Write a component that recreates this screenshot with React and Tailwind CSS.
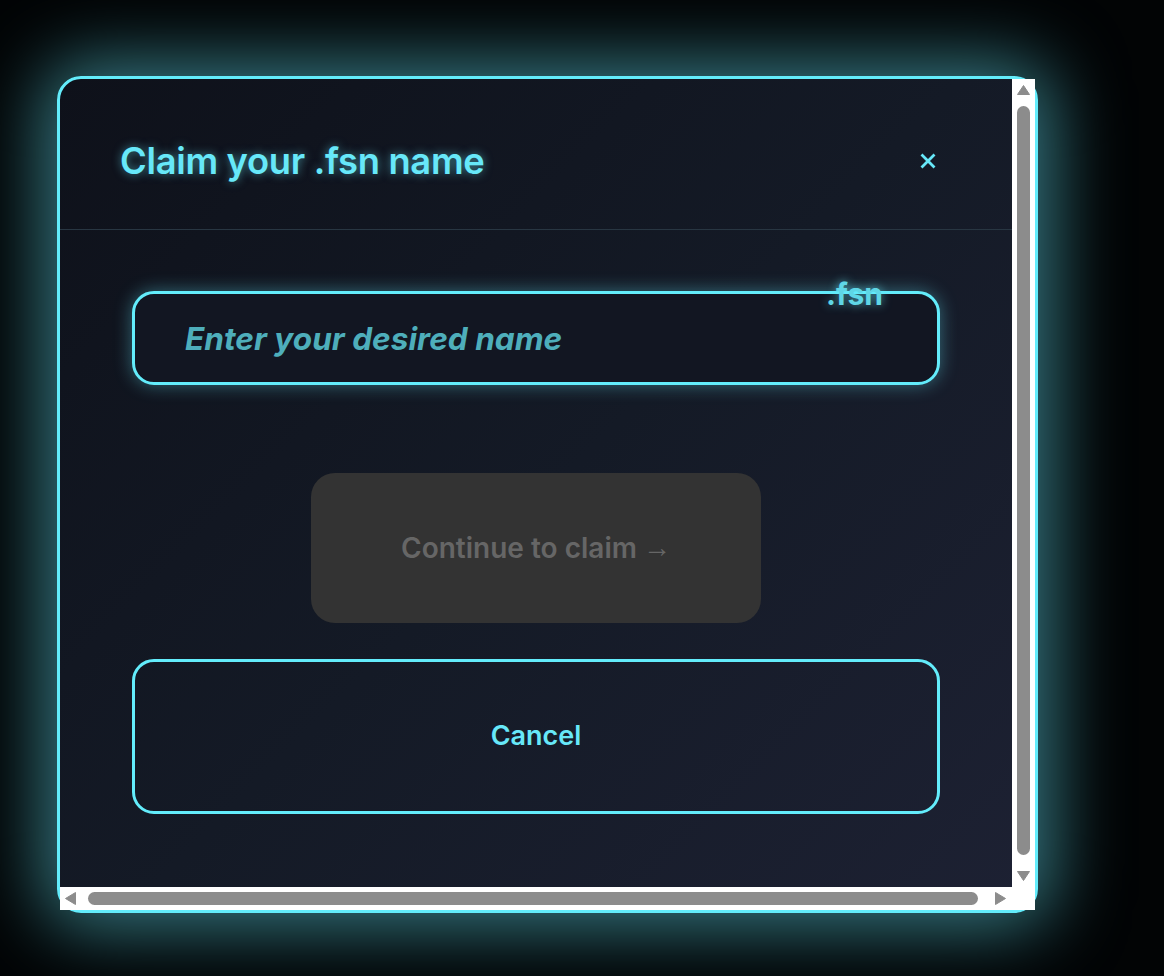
function ScrollArrow({ dir }) {
  const paths = {
    up: 'M6.5 0.5 12.5 9.5 0.5 9.5Z',
    down: 'M0.5 0.5 12.5 0.5 6.5 9.5Z',
    left: 'M10.5 0.5 10.5 12.5 0.5 6.5Z',
    right: 'M0.5 0.5 10.5 6.5 0.5 12.5Z',
  };
  const vertical = dir === 'up' || dir === 'down';
  return (
    <svg
      width={vertical ? 13 : 11}
      height={vertical ? 10 : 13}
      viewBox={vertical ? '0 0 13 10' : '0 0 11 13'}
      className="shrink-0"
    >
      <path d={paths[dir]} fill="#8c8c8c" stroke="#8c8c8c" strokeLinejoin="round" />
    </svg>
  );
}

export default function App() {
  return (
    <div className="min-h-[976px] w-full bg-[#020405] pl-[57px] pt-[76px] font-['Inter',sans-serif]">
      <div className="flex h-[837px] w-[981px] flex-col rounded-[24px] border-[3px] border-[#63ecfb] bg-[linear-gradient(135deg,#0e111a_0%,#141a26_50%,#1d2133_100%)] shadow-[0_0_75px_12px_rgba(103,232,249,0.55)]">
        <div className="flex min-h-0 flex-1">
          <div className="min-w-0 flex-1 overflow-hidden">
            {/* Header */}
            <div className="flex h-[151px] items-center justify-between border-b border-[#283642] pl-[60px] pr-[76px] pt-[14px]">
              <h2 className="text-[36.3px] font-semibold tracking-[-0.3px] text-[#67e8f9] [text-shadow:0_0_10px_rgba(103,232,249,0.55)]">
                Claim your .fsn name
              </h2>
              <svg width="16" height="16" viewBox="0 0 16 16" className="text-[#67e8f9]">
                <path d="M1.5 1.5 14.5 14.5M14.5 1.5 1.5 14.5" stroke="currentColor" strokeWidth="2.8" />
              </svg>
            </div>

            {/* Body */}
            <div className="flex flex-col items-center px-[72px] pt-[61px]">
              <div className="relative w-full">
                <input
                  placeholder="Enter your desired name"
                  className="h-[94px] w-full rounded-[22px] border-[3px] border-[#63ecfb] bg-[#121622] pl-[50px] pr-6 text-[31.6px] font-bold italic text-[#67e8f9] outline-none shadow-[0_0_18px_rgba(103,232,249,0.4)] placeholder:text-[#4eaebb]"
                />
                <span className="absolute right-[57px] top-[-19px] text-[30px] font-bold text-[#5fd6e6] [text-shadow:0_0_10px_rgba(103,232,249,0.7)]">
                  .fsn
                </span>
              </div>

              <button
                disabled
                className="mt-[88px] flex h-[150px] w-[450px] items-center justify-center rounded-[24px] bg-[#333333] text-[28px] font-semibold text-[#666666]"
              >
                Continue to claim
                <span className="ml-1.5 font-['Liberation_Sans',sans-serif] text-[28px] font-normal">→</span>
              </button>

              <button className="mt-[36px] flex h-[155px] w-full items-center justify-center rounded-[22px] border-[3px] border-[#63ecfb] text-[27px] font-semibold text-[#67e8f9]">
                Cancel
              </button>
            </div>
          </div>

          {/* Vertical scrollbar */}
          <div className="flex w-[23px] shrink-0 flex-col items-center bg-white pb-[6px] pt-[6px]">
            <ScrollArrow dir="up" />
            <div className="mb-[16px] mt-[11px] w-[13px] flex-1 rounded-full bg-[#8c8c8c]" />
            <ScrollArrow dir="down" />
          </div>
        </div>

        {/* Horizontal scrollbar */}
        <div className="flex h-[23px] shrink-0">
          <div className="flex flex-1 items-center bg-white pl-[5px] pr-[6px]">
            <ScrollArrow dir="left" />
            <div className="ml-[12px] mr-[17px] h-[13px] flex-1 rounded-full bg-[#8c8c8c]" />
            <ScrollArrow dir="right" />
          </div>
          <div className="w-[23px] bg-white" />
        </div>
      </div>
    </div>
  );
}
